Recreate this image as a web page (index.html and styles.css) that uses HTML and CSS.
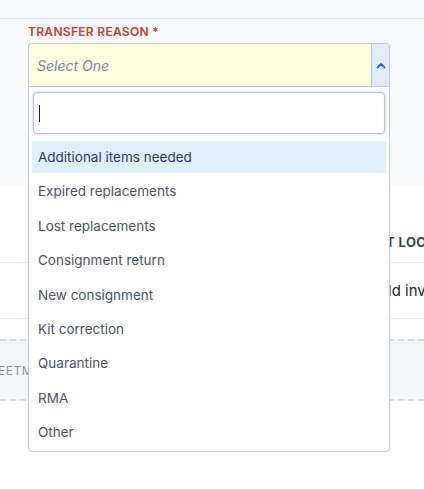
FILE: index.html
```html
<!DOCTYPE html>
<html>
<head>
<meta charset="utf-8">
<link rel="stylesheet" href="styles.css">
</head>
<body>
<div class="topbar"></div>
<section class="form-section">
  <div class="field">
    <label class="field-label">TRANSFER REASON *</label>
    <div class="select">
      <span class="select-value">Select One</span>
      <span class="select-toggle">
        <svg width="10" height="7" viewBox="0 0 10 7"><path d="M1.5 5.5 L5 2 L8.5 5.5" fill="none" stroke="#3f5bc6" stroke-width="1.8" stroke-linecap="round" stroke-linejoin="round"/></svg>
      </span>
    </div>
    <div class="dropdown">
      <div class="search"><span class="caret"></span></div>
      <ul class="options">
        <li class="option active">Additional items needed</li>
        <li class="option">Expired replacements</li>
        <li class="option">Lost replacements</li>
        <li class="option">Consignment return</li>
        <li class="option">New consignment</li>
        <li class="option">Kit correction</li>
        <li class="option">Quarantine</li>
        <li class="option">RMA</li>
        <li class="option">Other</li>
      </ul>
    </div>
  </div>
</section>
<section class="table-section">
  <div class="thead">
    <div class="cell-spacer"></div>
    <div class="th">T LOCATION</div>
  </div>
  <div class="trow">
    <div class="cell-spacer"></div>
    <div class="td">ld inventory</div>
  </div>
  <div class="dashed-box">
    <span class="dashed-label">EETM</span>
  </div>
</section>
</body>
</html>
```
FILE: styles.css
```css
* { box-sizing: border-box; }
html, body { margin: 0; padding: 0; }
body {
  font-family: Inter, "Noto Sans", sans-serif;
  background: #ffffff;
  width: 424px;
  height: 489px;
  overflow: hidden;
}
.topbar {
  height: 19px;
  background: #f8f9fb;
  border-bottom: 1px solid #e3e6ed;
}
.form-section {
  background: #f9fafc;
  height: 167px;
  padding: 5px 34px 0 28px;
}
.field { position: relative; }
.field-label {
  display: block;
  font-size: 12px;
  font-weight: 600;
  color: #c4402f;
  letter-spacing: 0.3px;
  line-height: 14px;
  height: 19px;
  padding-top: 1px;
}
.select {
  display: flex;
  height: 44px;
  border: 1px solid #c3c9d5;
  border-bottom-color: #c9ceda;
  border-radius: 4px 4px 0 0;
  background: #fefee2;
  overflow: hidden;
}
.select-value {
  flex: 1;
  padding-left: 8px;
  display: flex;
  align-items: center;
  font-style: italic;
  font-size: 14px;
  color: #7d88a3;
  border-right: 1px solid #c3c9d5;
}
.select-toggle {
  width: 17px;
  background: #e1edfc;
  display: flex;
  align-items: center;
  justify-content: center;
}
.dropdown {
  position: absolute;
  left: 0;
  top: 63px;
  width: 362px;
  background: #ffffff;
  border: 1px solid #c5cbd8;
  border-top: none;
  border-radius: 0 0 4px 4px;
  padding: 5px 3px 1px 3px;
  z-index: 2;
}
.search {
  margin: 0 1px;
  height: 42px;
  border: 1px solid #b9c3d8;
  border-radius: 4px;
  box-shadow: 0 0 2px 1px rgba(160, 176, 210, 0.35), inset 0 1px 2px rgba(0,0,0,0.05);
  display: flex;
  align-items: center;
  padding-left: 5px;
}
.caret {
  width: 1px;
  height: 17px;
  background: #222;
}
.options {
  list-style: none;
  margin: 7px 0 0 0;
  padding: 0;
}
.option {
  height: 32px;
  margin-bottom: 2.375px;
  display: flex;
  align-items: center;
  padding-left: 6px;
  font-size: 13.5px;
  color: #4b5567;
}
.option.active {
  background: #e1effd;
  color: #2f3a6c;
}
.table-section {
  background: #fff;
  overflow: hidden;
}
.thead {
  display: flex;
  height: 77px;
  align-items: flex-end;
  padding-bottom: 12px;
  border-bottom: 1px solid #e6e9ef;
  overflow: hidden;
}
.cell-spacer { width: 386px; flex: none; }
.th {
  font-size: 13px;
  font-weight: 700;
  color: #394457;
  letter-spacing: 0.4px;
  white-space: nowrap;
}
.trow {
  display: flex;
  height: 56px;
  align-items: center;
  border-bottom: 1px solid #e6e9ef;
  overflow: hidden;
}
.td {
  font-size: 15px;
  color: #1f2430;
  white-space: nowrap;
  margin-left: 2px;
}
.dashed-box {
  margin-top: 20px;
  height: 62px;
  background: #f5f6fa;
  border-top: 2px dashed #d6dae3;
  border-bottom: 2px dashed #d6dae3;
  display: flex;
  align-items: center;
  overflow: hidden;
}
.dashed-label {
  margin-left: -2px;
  font-size: 12px;
  color: #8a93a6;
  letter-spacing: 0.5px;
}
```
